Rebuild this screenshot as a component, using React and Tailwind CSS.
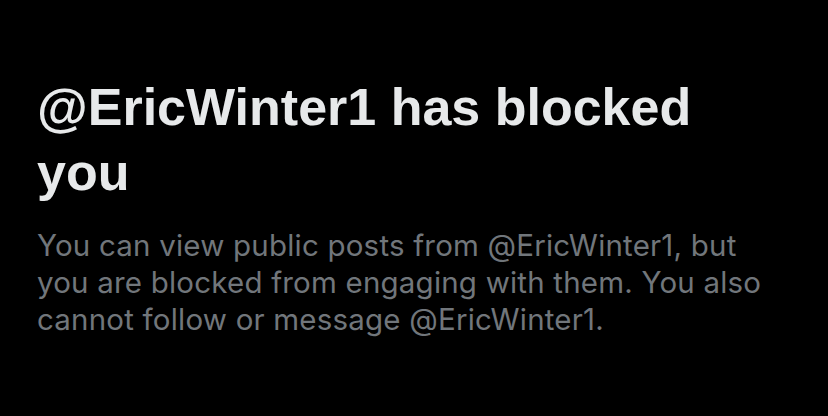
import React from 'react';

const App = () => {
  return (
    <div className="w-[828px] h-[416px] bg-black overflow-hidden">
      <div className="pt-[75px] pl-[37px] pr-[40px]">
        {/* Heading */}
        <h1 className="w-[700px] text-[52px] leading-[65px] font-bold text-[#e7e9ea] font-['Liberation_Sans',Arial,sans-serif]">
          @EricWinter1 has blocked you
        </h1>

        {/* Description */}
        <p className="mt-[22px] w-[740px] text-[29.5px] leading-[37px] tracking-[0.2px] text-[#71767b] font-['Inter',sans-serif]">
          You can view public posts from @EricWinter1, but you are blocked from engaging with them. You also cannot follow or message @EricWinter1.
        </p>
      </div>
    </div>
  );
};

export default App;
